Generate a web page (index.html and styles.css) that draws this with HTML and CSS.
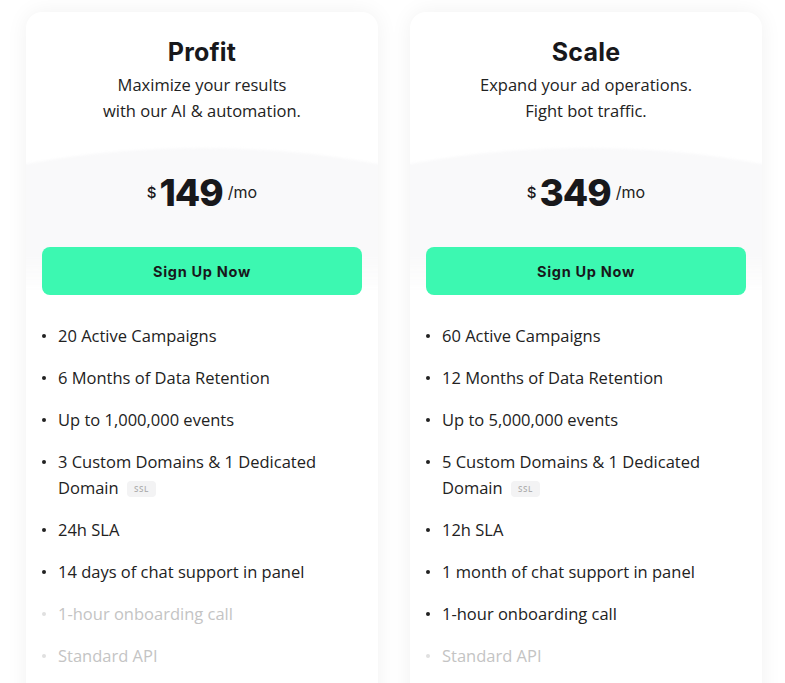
FILE: index.html
```html
<!DOCTYPE html>
<html lang="en">
<head>
<meta charset="utf-8">
<title>Pricing</title>
<link rel="stylesheet" href="styles.css">
</head>
<body>
<div class="plans">
  <div class="card">
    <div class="wave"></div>
    <div class="head">
      <h2 class="title">Profit</h2>
      <p class="desc">Maximize your results<br>with our AI &amp; automation.</p>
    </div>
    <div class="price"><span class="cur">$</span><span class="amt">149</span><span class="per">/mo</span></div>
    <a class="btn" href="#">Sign Up Now</a>
    <ul class="features">
      <li>20 Active Campaigns</li>
      <li>6 Months of Data Retention</li>
      <li>Up to 1,000,000 events</li>
      <li>3 Custom Domains &amp; 1 Dedicated Domain <span class="badge">SSL</span></li>
      <li>24h SLA</li>
      <li>14 days of chat support in panel</li>
      <li class="off">1-hour onboarding call</li>
      <li class="off">Standard API</li>
    </ul>
  </div>
  <div class="card">
    <div class="wave"></div>
    <div class="head">
      <h2 class="title">Scale</h2>
      <p class="desc">Expand your ad operations.<br>Fight bot traffic.</p>
    </div>
    <div class="price"><span class="cur">$</span><span class="amt">349</span><span class="per">/mo</span></div>
    <a class="btn" href="#">Sign Up Now</a>
    <ul class="features">
      <li>60 Active Campaigns</li>
      <li>12 Months of Data Retention</li>
      <li>Up to 5,000,000 events</li>
      <li>5 Custom Domains &amp; 1 Dedicated Domain <span class="badge">SSL</span></li>
      <li>12h SLA</li>
      <li>1 month of chat support in panel</li>
      <li>1-hour onboarding call</li>
      <li class="off">Standard API</li>
    </ul>
  </div>
</div>
</body>
</html>
```

FILE: styles.css
```css
* { box-sizing: border-box; }
html, body { margin: 0; padding: 0; background: #fff; }
body {
  font-family: "Open Sans", "Liberation Sans", sans-serif;
  color: #1f1f22;
  overflow: hidden;
}
.plans {
  display: flex;
  gap: 32px;
  padding: 12px 0 0 26px;
}
.card {
  position: relative;
  overflow: hidden;
  width: 352px;
  height: 720px;
  background: #fff;
  border-radius: 16px;
  box-shadow: 0 0 22px rgba(0, 0, 0, 0.06);
  padding: 24px 16px 0;
  display: flex;
  flex-direction: column;
}
.wave {
  position: absolute;
  left: -224px;
  top: 136px;
  width: 800px;
  height: 314px;
  border-radius: 50%;
  background: linear-gradient(to bottom, #f9f9fa 0, #f9f9fa 34%, rgba(255,255,255,0) 46%);
  filter: blur(1px);
}
.head, .price, .btn, .features { position: relative; }
.head { text-align: center; }
.title {
  margin: 0;
  font-family: Inter, "Noto Sans", sans-serif;
  font-weight: 700;
  font-size: 25px;
  line-height: 32px;
  color: #18181b;
  letter-spacing: 0.2px;
}
.desc {
  margin: 4px 0 0;
  font-size: 16.5px;
  line-height: 26px;
  color: #222;
}
.price {
  margin-top: 47px;
  display: flex;
  justify-content: center;
  align-items: center;
  height: 44px;
  font-family: Inter, "Noto Sans", sans-serif;
  color: #18181b;
}
.cur { font-size: 15px; font-weight: 500; margin-right: 3px; margin-top: -2px; }
.amt { font-size: 37px; font-weight: 800; letter-spacing: -1px; line-height: 44px; }
.per { font-size: 16px; font-weight: 400; margin-left: 5px; margin-top: -2px; color: #222; }
.btn {
  margin-top: 32px;
  height: 48px;
  border-radius: 8px;
  background: #3cf8b1;
  display: flex;
  align-items: center;
  justify-content: center;
  font-family: Inter, "Noto Sans", sans-serif;
  font-weight: 700;
  font-size: 14.5px;
  letter-spacing: 0.7px;
  color: #18181b;
  text-decoration: none;
}
.features {
  list-style: none;
  margin: 28px 0 0;
  padding: 0;
  display: flex;
  flex-direction: column;
  gap: 16px;
}
.features li {
  position: relative;
  padding-left: 16px;
  font-size: 16.5px;
  line-height: 26px;
  color: #222;
}
.features li::before {
  content: "";
  position: absolute;
  left: 0;
  top: 11px;
  width: 4px;
  height: 4px;
  border-radius: 50%;
  background: #222;
}
.features li.off { color: #c4c4c4; }
.features li.off::before { background: #e0e0e0; }
.badge {
  display: inline-block;
  vertical-align: 2px;
  margin-left: 4px;
  padding: 0 7px;
  height: 16px;
  line-height: 16px;
  border-radius: 4px;
  background: #f3f3f4;
  color: #b0b0b0;
  font-size: 8px;
  font-weight: 600;
  letter-spacing: 0.6px;
}
```
